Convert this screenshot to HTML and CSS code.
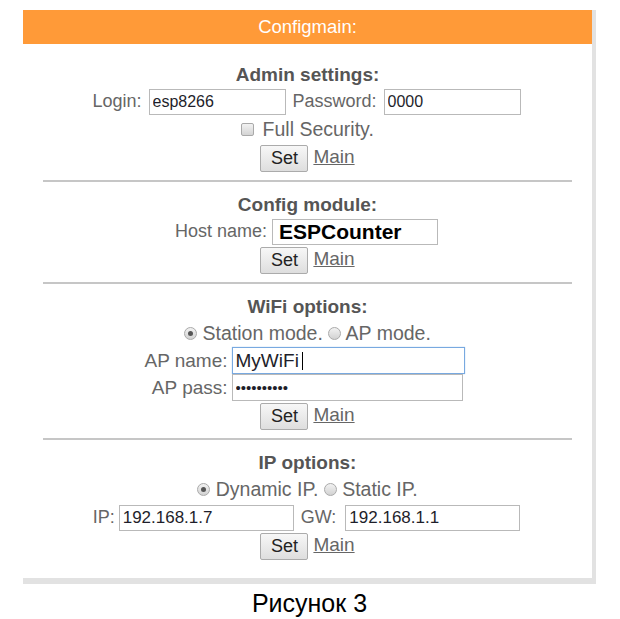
FILE: index.html
```html
<!DOCTYPE html>
<html lang="ru">
<head>
<meta charset="utf-8">
<title>Configmain</title>
<link rel="stylesheet" href="styles.css">
</head>
<body>
<div class="page">
  <div class="panel">
    <div class="header">Configmain:</div>
    <div class="content">
      <section class="sec">
        <div class="title">Admin settings:</div>
        <div class="row">Login: <input class="field f-login" type="text" value="esp8266"> Password: <input class="field f-login" type="text" value="0000"></div>
        <div class="row opt"><span class="check"></span> Full Security.</div>
        <div class="row"><button class="btn">Set</button> <a class="link" href="#">Main</a></div>
      </section>
      <hr class="sep">
      <section class="sec">
        <div class="title">Config module:</div>
        <div class="row">Host name:<input class="field f-host" type="text" value="ESPCounter"></div>
        <div class="row"><button class="btn">Set</button> <a class="link" href="#">Main</a></div>
      </section>
      <hr class="sep">
      <section class="sec">
        <div class="title">WiFi options:</div>
        <div class="row opt"><span class="radio on"></span> Station mode. <span class="radio"></span> AP mode.</div>
        <div class="grid">
          <label class="glabel">AP name:</label>
          <div class="gcell"><input class="field f-ap focus" type="text" value="MyWiFi"><span class="caret"></span></div>
          <label class="glabel">AP pass:</label>
          <div class="gcell"><input class="field f-ap pass" type="password" value="0123456789"></div>
        </div>
        <div class="row"><button class="btn">Set</button> <a class="link" href="#">Main</a></div>
      </section>
      <hr class="sep">
      <section class="sec">
        <div class="title">IP options:</div>
        <div class="row opt"><span class="radio on"></span> Dynamic IP. <span class="radio"></span> Static IP.</div>
        <div class="row">IP:<input class="field f-ip" type="text" value="192.168.1.7"> GW: <input class="field f-ip" type="text" value="192.168.1.1"></div>
        <div class="row"><button class="btn">Set</button> <a class="link" href="#">Main</a></div>
      </section>
    </div>
  </div>
  <div class="caption">Рисунок 3</div>
</div>
</body>
</html>
```
FILE: styles.css
```css
html, body {
  margin: 0;
  padding: 0;
  background: #ffffff;
}

body {
  font-family: "Liberation Sans", Arial, sans-serif;
  font-size: 18px;
  color: #666666;
}

.page {
  padding: 10px 0 0 23px;
  width: 573px;
}

.panel {
  width: 569px;
  background: #ffffff;
  border-right: 4px solid #e2e2e2;
  border-bottom: 6px solid #e2e2e2;
}

.header {
  height: 34px;
  line-height: 34px;
  background: #ff9a38;
  color: #ffffff;
  text-align: center;
  font-size: 18.5px;
}

.content {
  padding: 19px 0 19px;
}

.title {
  height: 24px;
  line-height: 24px;
  text-align: center;
  font-weight: bold;
  font-size: 19px;
  color: #555555;
}

.row {
  height: 28px;
  line-height: 28px;
  text-align: center;
  white-space: nowrap;
}

.row.opt {
  font-size: 19.5px;
}

.sep {
  border: 0;
  height: 2px;
  background: #c6c6c6;
  margin: 9px 20px 11px;
}

.field {
  box-sizing: border-box;
  height: 26px;
  margin: 0 2px;
  padding: 0 3px;
  border: 1px solid #b9b9b9;
  background: #ffffff;
  font-family: "Liberation Sans", Arial, sans-serif;
  font-size: 16px;
  color: #1e1e2a;
  vertical-align: middle;
  outline: none;
}

.f-login {
  width: 137px;
}

.f-host {
  width: 166px;
  margin-left: 5px;
  font-size: 21px;
  font-weight: bold;
  color: #000000;
  padding-left: 6px;
}

.f-ip {
  width: 175px;
  margin-left: 4px;
  font-size: 17px;
}

.grid {
  display: grid;
  grid-template-columns: auto auto;
  justify-content: center;
  column-gap: 4px;
  margin-left: -6px;
}

.glabel {
  height: 27px;
  line-height: 27px;
  text-align: right;
  font-size: 19px;
}

.gcell {
  height: 27px;
  display: flex;
  align-items: center;
  position: relative;
}

.f-ap {
  width: 233px;
  height: 27px;
  margin: 0;
  font-size: 19px;
}

.f-ap.focus {
  border-color: #78a9e0;
  box-shadow: 0 0 1px #9cc3ee;
}

.f-ap.pass {
  width: 231px;
  font-size: 15px;
  letter-spacing: 0;
}

.caret {
  position: absolute;
  left: 70px;
  top: 5px;
  width: 1px;
  height: 18px;
  background: #000000;
}

.btn {
  box-sizing: border-box;
  height: 27px;
  width: 48px;
  padding: 0;
  border: 1px solid #ababab;
  border-radius: 2px;
  background: linear-gradient(#f7f7f7, #dedede);
  font-family: "Liberation Sans", Arial, sans-serif;
  font-size: 18px;
  color: #222222;
  vertical-align: middle;
}

.link {
  color: #666666;
  text-decoration: underline;
  font-size: 19px;
}

.check {
  display: inline-block;
  box-sizing: border-box;
  width: 13px;
  height: 13px;
  border: 1px solid #a9a9a9;
  border-radius: 2px;
  background: linear-gradient(#f2f2f2, #d4d4d4);
  vertical-align: 0;
  margin-right: 3px;
}

.radio {
  display: inline-block;
  position: relative;
  box-sizing: border-box;
  width: 13px;
  height: 13px;
  border: 1px solid #aaaaaa;
  border-radius: 50%;
  background: linear-gradient(#f2f2f2, #d2d2d2);
  vertical-align: 0;
}

.radio.on::after {
  content: "";
  position: absolute;
  left: 3px;
  top: 3px;
  width: 5px;
  height: 5px;
  border-radius: 50%;
  background: #555555;
}

.caption {
  width: 573px;
  margin-top: 5px;
  height: 28px;
  line-height: 28px;
  text-align: center;
  font-size: 25px;
  color: #000000;
}
```
